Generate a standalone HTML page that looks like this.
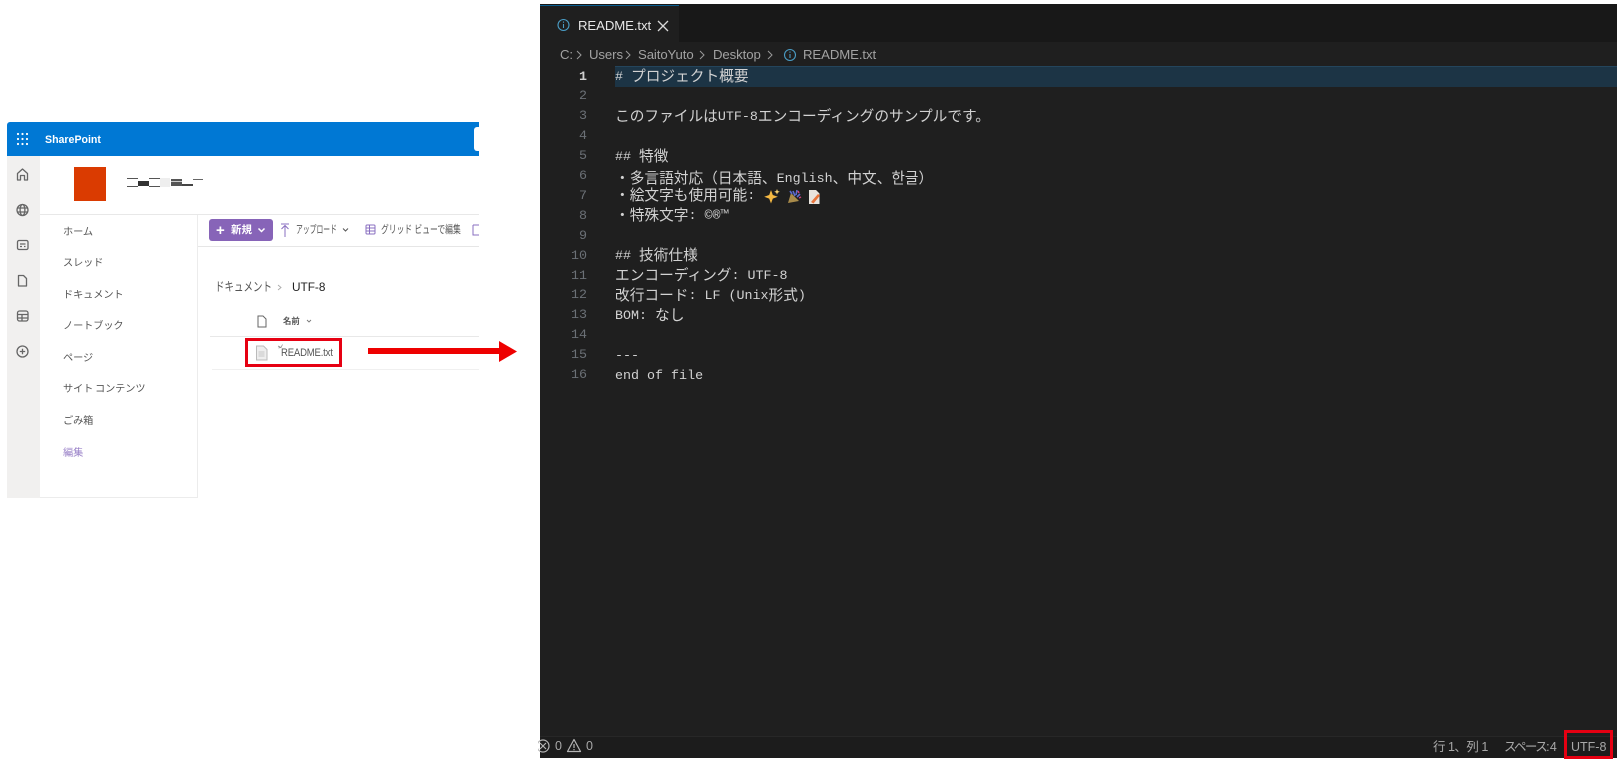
<!DOCTYPE html>
<html lang="ja"><head><meta charset="utf-8"><title>README</title>
<style>
html,body{margin:0;padding:0;width:1621px;height:764px;overflow:hidden;background:#fff}
body{position:relative;font-family:"Liberation Sans","Noto Sans CJK JP",sans-serif}
.a{position:absolute}
.t{position:absolute;white-space:pre;line-height:20px;height:20px}
.n{color:#555;font-size:10.2px;left:63px;letter-spacing:-.1px;word-spacing:-1px}
.c{font-family:"Liberation Mono","Noto Sans CJK JP",monospace;font-size:14.7px;color:#d2d2d2;left:615px;filter:blur(.25px)}
.c i{font-style:normal;font-size:13.35px;position:relative;top:-1px}
.g{font-family:"Liberation Mono",monospace;font-size:13.35px;color:#6b7076;right:1034px;text-align:right;filter:blur(.25px)}
.b{color:#a2a2a2;font-size:13.2px;letter-spacing:-.1px}
.s{color:#a8a8a8;font-size:12.5px}
.left{filter:blur(.35px)}
.x{transform-origin:left center}
</style></head><body>

<div class="left">
<div class="a" style="left:7px;top:122px;width:472px;height:34px;background:#0078d4;border-radius:3px 0 0 0"></div>
<div class="a" style="left:474px;top:127px;width:5px;height:24px;background:#fff;border-radius:3px 0 0 3px"></div>
<div class="t" style="left:45px;top:130px;color:#fff;font-size:10.6px;font-weight:bold">SharePoint</div>
<div class="a" style="left:7px;top:156px;width:33px;height:342px;background:#f1f0ef"></div>
<div class="a" style="left:74px;top:167px;width:32px;height:34px;background:#da3b01"></div>
<div class="a" style="left:40px;top:214px;width:439px;height:1px;background:#e8e8e8"></div>
<div class="a" style="left:197px;top:215px;width:1px;height:282px;background:#ececec"></div>
<div class="a" style="left:40px;top:497px;width:158px;height:1px;background:#ececec"></div>
<div class="a" style="left:198px;top:246px;width:281px;height:1px;background:#e6e6e6"></div>
<div class="a" style="left:209px;top:219px;width:64px;height:22px;background:#8764b8;border-radius:3px"></div>
<div class="t" style="left:216px;top:220px;color:#fff;font-size:15px;line-height:21px;font-weight:bold">+</div>
<div class="t" style="left:231px;top:220px;color:#fff;font-size:10.5px;font-weight:bold">新規</div>
<div class="t x" style="left:296px;top:220px;color:#555;font-size:11px;transform:scaleX(.62)">アップロード</div>
<div class="t x" style="left:381px;top:220px;color:#555;font-size:11px;transform:scaleX(.71)">グリッド ビューで編集</div>

<div class="t n" style="top:223px">ホーム</div>
<div class="t n" style="top:254px">スレッド</div>
<div class="t n" style="top:286px">ドキュメント</div>
<div class="t n" style="top:317px">ノートブック</div>
<div class="t n" style="top:349px">ページ</div>
<div class="t n" style="top:380px">サイト コンテンツ</div>
<div class="t n" style="top:412px">ごみ箱</div>
<div class="t n" style="top:444px;color:#9a82c8">編集</div>

<div class="t x" style="left:215px;top:277px;color:#555;font-size:12.5px;transform:scaleX(.76)">ドキュメント</div>
<div class="t" style="left:292px;top:277px;color:#222;font-size:11.8px">UTF-8</div>
<div class="t" style="left:283px;top:311px;color:#555;font-size:8.4px;font-weight:bold">名前</div>
<div class="a" style="left:210px;top:336px;width:269px;height:1px;background:#e8e8e8"></div>
<div class="a" style="left:212px;top:369px;width:267px;height:1px;background:#f0f0f0"></div>
<div class="t x" style="left:281px;top:343px;color:#555;font-size:10.6px;letter-spacing:-.2px;transform:scaleX(.9)">README.txt</div>
</div>

<svg class="a left" style="left:0;top:0" width="540" height="764" viewBox="0 0 540 764" fill="none">
<g fill="#fff"><circle cx="18" cy="134" r="1.1"/><circle cx="22.5" cy="134" r="1.1"/><circle cx="27" cy="134" r="1.1"/><circle cx="18" cy="139" r="1.1"/><circle cx="22.5" cy="139" r="1.1"/><circle cx="27" cy="139" r="1.1"/><circle cx="18" cy="144" r="1.1"/><circle cx="22.5" cy="144" r="1.1"/><circle cx="27" cy="144" r="1.1"/></g>
<g>
<rect x="127" y="178" width="11" height="1" fill="#555"/><rect x="127" y="186" width="11" height="1" fill="#555"/>
<rect x="138" y="181" width="11" height="5" fill="#333"/>
<rect x="149" y="178" width="11" height="1" fill="#555"/><rect x="149" y="186" width="11" height="1" fill="#555"/>
<rect x="160" y="178" width="10" height="9" fill="#eee"/>
<rect x="171" y="179" width="11" height="7" fill="#555"/><rect x="171" y="181" width="11" height="1" fill="#ccc"/>
<rect x="182" y="184" width="11" height="2" fill="#444"/>
<rect x="193" y="179" width="10" height="1" fill="#666"/>
</g>
<g stroke="#666" stroke-width="1.3" stroke-linejoin="round">
<path d="M17.5 180v-6.5l5-4.5 5 4.500v6.500h-3v-4.500h-4v4.500z"/>
<circle cx="22.500" cy="210" r="5.500"/><ellipse cx="22.500" cy="210" rx="2.400" ry="5.500"/><path d="M17 208h11M17 212h11"/>
<rect x="17.500" y="240.500" width="10.500" height="9" rx="1.500"/><path d="M20 244h5.500M20 246.500h2M24 246.500h1.500"/>
<path d="M18.500 275.500h5l3 3v7.500h-8z"/>
<rect x="17.500" y="311" width="10.500" height="10" rx="2"/><path d="M17.500 314.500h10.500M17.500 318h10.500M22 314.500v6.500"/>
<circle cx="22.500" cy="351.500" r="5.500"/><path d="M22.500 348.800v5.400M19.800 351.500h5.400"/>
</g>
<g stroke="#fff" stroke-width="1.500"><path d="M258.500 228.500l3 3 3-3"/></g>
<g stroke="#8a6fc0" stroke-width="1"><path d="M281 224h8M285 226v11M281.500 229l3.500-3.500 3.500 3.500"/>
<rect x="366" y="225" width="9" height="9" rx="1"/><path d="M366 228h9M366 231h9M369.500 225v9"/>
<path d="M473 225h6M473 225v10h6"/></g>
<g stroke="#555" stroke-width="1"><path d="M343 228.500l2.500 2.500 2.500-2.500"/></g>
<path d="M278 285l3 2.500-3 2.500" stroke="#aaa" stroke-width=".9"/>
<path d="M258 316h5l3 3v8h-8z" stroke="#666" stroke-width="1"/>
<path d="M307 320l2 2 2-2" stroke="#777" stroke-width=".9"/>
<path d="M256.500 346h7l3.500 3.500v10.500h-10.500z" fill="#eee" stroke="#bbb" stroke-width="1"/>
<path d="M258.500 352h6M258.500 354h6M258.500 356h6" stroke="#bbb" stroke-width=".8"/>
<path d="M278 346l3 1.500 1.500-3M278.500 348l2-.5" stroke="#888" stroke-width=".7"/>
<rect x="246.500" y="339.500" width="94" height="26" stroke="#e60012" stroke-width="3"/>
</svg>
<div class="a" style="left:368px;top:348px;width:132px;height:6px;background:#ee0000"></div>
<svg class="a" style="left:499px;top:341px" width="19" height="21" viewBox="0 0 19 21"><path d="M0 0L18 10.500L0 21z" fill="#ee0000"/></svg>

<div class="a" style="left:540px;top:4px;width:1077px;height:754px;background:#1f1f1f;overflow:hidden"></div>
<div class="a" style="left:540px;top:4px;width:1077px;height:38px;background:#181818"></div>
<div class="a" style="left:540px;top:5px;width:139px;height:37px;background:#1f1f1f;border-top:1px solid #0a5d8f"></div>
<div class="a" style="left:615px;top:66px;width:1002px;height:21px;background:#1c3445;border-top:1px solid #24455c;box-sizing:border-box"></div>
<div class="a" style="left:540px;top:736px;width:1077px;height:22px;background:#1c1c1c;border-top:1px solid #272727;box-sizing:border-box"></div>

<div class="t" style="left:578px;top:16px;color:#e6e6e6;font-size:13.2px;letter-spacing:-.1px">README.txt</div>
<div class="t b" style="left:560px;top:45px">C:</div>
<div class="t b" style="left:589px;top:45px">Users</div>
<div class="t b" style="left:638px;top:45px">SaitoYuto</div>
<div class="t b" style="left:713px;top:45px">Desktop</div>
<div class="t b" style="left:803px;top:45px">README.txt</div>

<svg class="a" style="left:540px;top:0" width="340" height="70" viewBox="540 0 340 70" fill="none">
<circle cx="563.500" cy="25" r="5.500" stroke="#4a9cc4" stroke-width="1.100"/><path d="M563.500 24v4M563.500 21.500v1.200" stroke="#4a9cc4" stroke-width="1.100"/>
<path d="M658 21l10 10M668 21l-10 10" stroke="#d8d8d8" stroke-width="1.300"/>
<g stroke="#9a9a9a" stroke-width="1"><path d="M577 51l4 4-4 4M626 51l4 4-4 4M700 51l4 4-4 4M768 51l4 4-4 4"/></g>
<circle cx="790" cy="55" r="5.500" stroke="#4a9cc4" stroke-width="1.100"/><path d="M790 54v4M790 51.500v1.200" stroke="#4a9cc4" stroke-width="1.100"/>
</svg>

<div class="t g" style="top:67.5px;color:#d0d0d0;font-weight:bold">1</div>
<div class="t g" style="top:87.4px">2</div>
<div class="t g" style="top:107.3px">3</div>
<div class="t g" style="top:127.2px">4</div>
<div class="t g" style="top:147.1px">5</div>
<div class="t g" style="top:167px">6</div>
<div class="t g" style="top:186.9px">7</div>
<div class="t g" style="top:206.8px">8</div>
<div class="t g" style="top:226.7px">9</div>
<div class="t g" style="top:246.6px">10</div>
<div class="t g" style="top:266.5px">11</div>
<div class="t g" style="top:286.4px">12</div>
<div class="t g" style="top:306.3px">13</div>
<div class="t g" style="top:326.2px">14</div>
<div class="t g" style="top:346.1px">15</div>
<div class="t g" style="top:366px">16</div>

<div class="t c" style="top:68px"><i># </i>プロジェクト概要</div>
<div class="t c" style="top:107.8px">このファイルは<i>UTF-8</i>エンコーディングのサンプルです。</div>
<div class="t c" style="top:147.6px"><i>## </i>特徴</div>
<div class="t c" style="top:167.5px">・多言語対応（日本語、<i>English</i>、中文、<span style="font-family:'Noto Sans CJK KR',sans-serif">한글</span>）</div>
<div class="t c" style="top:187.4px">・絵文字も使用可能<i>: </i></div>
<div class="t c" style="top:207.3px">・特殊文字<i>: ©®™</i></div>
<div class="t c" style="top:247.1px"><i>## </i>技術仕様</div>
<div class="t c" style="top:267px">エンコーディング<i>: UTF-8</i></div>
<div class="t c" style="top:286.9px">改行コード<i>: LF (Unix</i>形式<i>)</i></div>
<div class="t c" style="top:306.8px"><i>BOM: </i>なし</div>
<div class="t c" style="top:346.6px"><i>---</i></div>
<div class="t c" style="top:366.5px"><i>end of file</i></div>

<svg class="a" style="left:764px;top:188px" width="60" height="17" viewBox="0 0 60 17">
<path d="M7 2l1.800 5 5 1.800-5 1.800L7 15.500l-1.800-4.900-5-1.800 5-1.800z" fill="#f5b942"/>
<path d="M13 1l.8 2 2 .8-2 .8-.8 2-.8-2-2-.8 2-.8z" fill="#f9d270"/>
<path d="M24 15l3-10 8 8z" fill="#a98b4a"/>
<path d="M29 3l2 5M33 2l-1 5M36 6l-3 3M26 3l2 3" stroke="#5c6bd0" stroke-width="1.600"/>
<path d="M34 3l1 2M37 9l-2 1" stroke="#d0457a" stroke-width="1.500"/>
<path d="M45 2h7l3.500 3.500V16H45z" fill="#e9e4de"/>
<path d="M47 14l7-8 2 1.500-6.500 8z" fill="#e8743b"/>
</svg>

<svg class="a" style="left:538px;top:736px" width="60" height="22" viewBox="538 736 60 22" fill="none">
<circle cx="543" cy="746" r="6" stroke="#b5b5b5" stroke-width="1.200"/><path d="M540 743l6 6M546 743l-6 6" stroke="#b5b5b5" stroke-width="1.200"/>
<path d="M574 739.500l6.500 12h-13z" stroke="#b5b5b5" stroke-width="1.200" stroke-linejoin="round"/><path d="M574 744v4M574 749v1.200" stroke="#b5b5b5" stroke-width="1.200"/>
</svg>
<div class="t s" style="left:555px;top:736px">0</div>
<div class="t s" style="left:586px;top:736px">0</div>
<div class="t s" style="left:1433px;top:737px;letter-spacing:-.5px">行 1、列 1</div>
<div class="t s" style="left:1504px;top:737px;letter-spacing:-1.6px">スペース: 4</div>
<div class="t s" style="left:1571px;top:737px">UTF-8</div>
<div class="a" style="left:1564px;top:730px;width:49px;height:29px;border:3px solid #e60012;box-sizing:border-box"></div>

</body></html>
